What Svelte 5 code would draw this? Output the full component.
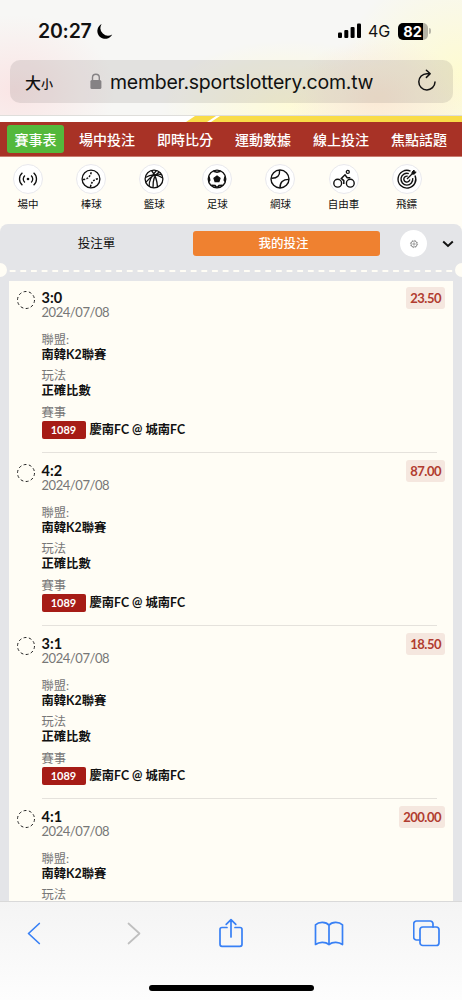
<script>
  const menu = ["賽事表", "場中投注", "即時比分", "運動數據", "線上投注", "焦點話題"];
  const sports = [
    { id: "live", name: "場中" },
    { id: "baseball", name: "棒球" },
    { id: "basketball", name: "籃球" },
    { id: "soccer", name: "足球" },
    { id: "tennis", name: "網球" },
    { id: "cycling", name: "自由車" },
    { id: "darts", name: "飛鏢" },
  ];

  const game = { date: "2024/07/08", league: "南韓K2聯賽" };
  const detail = { play: "正確比數", code: "1089", teams: "慶南FC @ 城南FC" };
  const bets = [
    { ...game, ...detail, score: "3:0", odds: "23.50" },
    { ...game, ...detail, score: "4:2", odds: "87.00" },
    { ...game, ...detail, score: "3:1", odds: "18.50" },
    { ...game, score: "4:1", odds: "200.00" },
  ];

  let active = 0;
</script>

<div class="phone">
  <header class="browser">
    <div class="status">
      <span class="time">20:27</span>
      <svg class="moon" width="17" height="17" viewBox="0 0 17 17">
        <path d="M5.6 1.1A7.8 7.8 0 1 0 16.2 11.4A7.6 7.6 0 0 1 5.6 1.1Z" />
      </svg>
      <svg class="signal" width="24" height="16" viewBox="0 0 24 16">
        <rect x="0" y="9.5" width="4" height="5.5" rx="1.1" />
        <rect x="6.3" y="7" width="4" height="8" rx="1.1" />
        <rect x="12.6" y="4" width="4" height="11" rx="1.1" />
        <rect x="19" y="0.5" width="4" height="14.5" rx="1.1" />
      </svg>
      <span class="network">4G</span>
      <span class="battery">82</span>
      <span class="battery-tip"></span>
    </div>
    <div class="address">
      <span class="text-size">大<small>小</small></span>
      <svg class="lock" width="12" height="17" viewBox="0 0 12 17">
        <path d="M2.5 8V4.6a3.4 3.4 0 0 1 6.8 0V8" fill="none" stroke="#858284" stroke-width="1.4" />
        <rect x="0.4" y="7" width="11" height="9" rx="1.5" fill="#858284" />
      </svg>
      <span class="url">member.sportslottery.com.tw</span>
      <svg class="reload" width="20" height="24" viewBox="0 0 20 24" fill="none" stroke="#111" stroke-width="1.5" stroke-linecap="round" stroke-linejoin="round">
        <path d="M18 13a8.1 8.1 0 1 1-8.1-8.3h2.6M9.4 1.2l3.8 3.6-3.8 3.6" />
      </svg>
    </div>
  </header>

  <main>
    <svg class="stripe" width="462" height="6" viewBox="0 0 462 6">
      <rect width="462" height="6" fill="#fff" />
      <path d="M195 0H216L207 6H186ZM220 0H462V6H211Z" fill="#f9dc48" />
    </svg>

    <nav class="menu">
      {#each menu as item, i}
        <button class:active={i === active} on:click={() => (active = i)}>{item}</button>
      {/each}
    </nav>

    <div class="sports">
      {#each sports as sport}
        <div class="sport">
          <span class="sport-icon">
            <svg width="22" height="22" viewBox="0 0 22 22" fill="none" stroke="#111" stroke-width="1.3">
              {#if sport.id === "live"}
                <circle cx="11" cy="11" r="1.3" fill="#111" stroke="none" />
                <path d="M7.9 7.4a4.8 4.8 0 0 0 0 7.2M14.1 7.4a4.8 4.8 0 0 1 0 7.2M5.4 4.7a8.3 8.3 0 0 0 0 12.6M16.6 4.7a8.3 8.3 0 0 1 0 12.6" />
              {:else if sport.id === "baseball"}
                <circle cx="11" cy="11" r="8.9" />
                <path d="M3 11.5Q10.5 11 11.5 2.8M10.5 19Q11.5 11.5 19 10.5" stroke-dasharray="2 1.3" stroke-width="1.5" />
              {:else if sport.id === "basketball"}
                <circle cx="11" cy="11" r="8.9" />
                <path d="M8.5 2.5Q14 9 14.5 19M2.4 9.5Q11 4 19.8 10M3 14.2Q12 3.5 19 7M6.2 18.3Q5.5 11 13.5 2.5M10 19.8Q9.5 8 16 4" />
              {:else if sport.id === "soccer"}
                <circle cx="11" cy="11" r="8.8" stroke-width="1.3" />
                <path d="M11 8l3 2.2-1.1 3.5H9.1L8 10.2Z" fill="#111" />
                <path d="M7.3 3.2L11 4.2l3.7-1M2.9 8.3l.8 3.9-.9 1.4M19.1 8.3l-.8 3.9.9 1.4M5.2 17.2l3.8.4 1.6 1.8M16.8 17.2l-3.8.4-1.6 1.8" stroke-width="1.6" />
              {:else if sport.id === "tennis"}
                <circle cx="11" cy="11" r="9" stroke-width="1.4" />
                <path d="M2.4 10.2C8.5 10.4 11 7.5 10.6 2.1M11 19.9C10.8 14 14 11.3 19.9 11.4" stroke-width="1.4" />
              {:else if sport.id === "cycling"}
                <circle cx="4.7" cy="15.2" r="3.9" stroke-width="1.4" />
                <circle cx="17.3" cy="15.2" r="3.9" stroke-width="1.4" />
                <circle cx="14.8" cy="3.9" r="1.5" stroke-width="1.3" />
                <path d="M10.8 16v-3.3L8.3 10.4 12 6.8l2.2 3h3.1" stroke-width="1.5" />
              {:else}
                <path d="M14.5 3.1A8.9 8.9 0 1 0 19 7.5M12.8 5.6A5.9 5.9 0 1 0 16.7 10.2M11.6 8.2A3 3 0 1 0 13.8 11.5" stroke-width="1.4" />
                <path d="M11 11L18 4" />
                <path d="M16 6V4.1L18 2l.5 1.7 1.7.5L18.1 6.2Z" fill="#111" stroke-width="0.9" />
              {/if}
            </svg>
          </span>
          <span class="sport-name">{sport.name}</span>
        </div>
      {/each}
    </div>

    <section class="slip">
      <div class="tabs">
        <span class="tab">投注單</span>
        <span class="tab selected">我的投注</span>
        <span class="settings">
          <svg width="10" height="10" viewBox="0 0 10 10" fill="none" stroke="#777" stroke-width="0.7">
            <circle cx="5" cy="5" r="3" />
            <circle cx="5" cy="5" r="1.1" />
            <circle cx="5" cy="5" r="3.6" stroke-dasharray="1.4 1.43" />
          </svg>
        </span>
        <svg class="chevron" width="12" height="8" viewBox="0 0 12 8" fill="none" stroke="#111" stroke-width="2">
          <path d="M1.2 1.5L6 5.9l4.8-4.4" />
        </svg>
      </div>
      <div class="perforation">
        <svg width="462" height="14" viewBox="0 0 462 14">
          <circle cx="0" cy="7" r="7" fill="#fffdf5" />
          <circle cx="462" cy="7" r="7" fill="#fffdf5" />
          <path d="M9.7 7.9H453" stroke="#fffdf5" stroke-width="2" stroke-dasharray="5.8 4.85" />
        </svg>
      </div>

      <div class="bets">
        {#each bets as bet}
          <article class="bet">
            <svg class="ring" width="20" height="20" viewBox="0 0 20 20">
              <circle cx="10" cy="10" r="8.5" fill="none" stroke="#222" stroke-width="1" stroke-dasharray="2.9 2.44" />
            </svg>
            <div class="detail">
              <div class="score">{bet.score}</div>
              <div class="date">{bet.date}</div>
              <dl>
                <dt>聯盟:</dt>
                <dd>{bet.league}</dd>
                <dt>玩法</dt>
                {#if bet.play}
                  <dd>{bet.play}</dd>
                  <dt>賽事</dt>
                  <dd class="match"><span class="code">{bet.code}</span>{bet.teams}</dd>
                {/if}
              </dl>
            </div>
            <span class="odds">{bet.odds}</span>
          </article>
        {/each}
      </div>
    </section>
  </main>

  <footer class="toolbar">
    <div class="tools">
      <svg width="28" height="30" viewBox="0 0 28 30"><path d="M18.3 5.5L7.5 15.5 18.3 25.5" /></svg>
      <svg class="disabled" width="28" height="30" viewBox="0 0 28 30"><path d="M9.5 5.5L20.5 15.5 9.5 25.5" /></svg>
      <svg width="28" height="30" viewBox="0 0 28 30">
        <path d="M11 9.5H6a2 2 0 0 0-2 2V26.3a2 2 0 0 0 2 2H24a2 2 0 0 0 2-2V11.5a2 2 0 0 0-2-2H19M15 19V1.8M10.2 6.3l4.8-4.7 4.8 4.7" />
      </svg>
      <svg width="30" height="30" viewBox="0 0 30 30">
        <path d="M15 7.3C12 3.5 5 3.5 1.5 6.8V26.5C5 24 11 23.3 15 26.5C19 23.3 25 24 28.5 26.5V6.8C25 3.5 18 3.5 15 7.3ZM15 7.3V26" />
      </svg>
      <svg width="28" height="30" viewBox="0 0 28 30">
        <rect x="7" y="9" width="19" height="18.5" rx="2.8" />
        <path d="M7 22H3.5a2.8 2.8 0 0 1-2.8-2.8V5.8A2.8 2.8 0 0 1 3.5 3H17.2a2.8 2.8 0 0 1 2.8 2.8V9" />
      </svg>
    </div>
    <div class="home-bar"></div>
  </footer>
</div>

<style>
  :global(body) {
    margin: 0;
  }

  .phone {
    display: flex;
    flex-direction: column;
    width: 462px;
    height: 1000px;
    overflow: hidden;
    background: #fffdf5;
    font-family: Lato, "Noto Sans CJK TC", sans-serif;
    color: #111;
  }

  svg {
    display: block;
    flex: none;
  }

  /* Browser chrome */
  .browser {
    box-sizing: border-box;
    flex: none;
    height: 116px;
    border-bottom: 1px solid #dfdedb;
    font-family: Inter, "Noto Sans CJK TC", sans-serif;
    background:
      radial-gradient(ellipse 100px 75px at 15px 90px, #fae5e5, transparent),
      radial-gradient(ellipse 90px 60px at 378px 98px, #fbe9d5, transparent),
      radial-gradient(ellipse 130px 65px at 290px 105px, #fefbd8, transparent),
      radial-gradient(ellipse 120px 110px at 462px 75px, #fefbd0, transparent),
      #f7f7f5;
  }

  .status {
    display: flex;
    align-items: center;
    height: 60px;
    padding: 2px 34px 0 38px;
    box-sizing: border-box;
  }

  .time {
    width: 58px;
    font-size: 19.5px;
    font-weight: 600;
    letter-spacing: -0.2px;
  }

  .signal {
    margin-left: auto;
  }

  .network {
    width: 30px;
    margin-left: 6px;
    font-size: 16px;
    letter-spacing: -0.2px;
  }

  .battery {
    box-sizing: border-box;
    width: 30px;
    height: 17px;
    padding-right: 1px;
    border-radius: 5px;
    background: linear-gradient(90deg, #000 82%, #b5b3a5 82%);
    color: #fff;
    font-size: 14.5px;
    font-weight: 700;
    line-height: 17px;
    text-align: center;
  }

  .battery-tip {
    width: 2px;
    height: 6px;
    margin: 0 -3px 0 1px;
    border-radius: 0 2px 2px 0;
    background: #b9b7a8;
  }

  .address {
    display: flex;
    align-items: center;
    box-sizing: border-box;
    height: 43px;
    margin: 0 9px 0 10px;
    padding: 0 16px 0 15px;
    border-radius: 10px;
    background: rgba(100, 90, 95, 0.14);
  }

  .text-size {
    width: 65px;
    font-size: 16px;
    font-weight: 500;
  }

  .text-size small {
    font-size: 12px;
  }

  .url {
    margin-left: 8px;
    font-size: 19.5px;
    letter-spacing: -0.25px;
    white-space: nowrap;
  }

  .reload {
    margin: -2px 0 0 auto;
  }

  main {
    flex: 1;
    min-height: 0;
    overflow: hidden;
  }

  /* Main menu */
  .menu {
    display: flex;
    align-items: center;
    gap: 8px;
    height: 34px;
    padding-left: 7px;
    border-bottom: 1px solid #c87d70;
    background: #a83226;
  }

  .menu button {
    flex: none;
    width: 70px;
    height: 28px;
    padding: 0;
    border: 0;
    border-radius: 3px;
    background: none;
    color: #fff;
    font: 500 14px "Noto Sans CJK TC", sans-serif;
    white-space: nowrap;
  }

  .menu button.active {
    width: 57px;
    background: #54b83c;
  }

  .sports {
    display: flex;
    height: 67px;
    padding: 7px 0 0;
    margin-left: -3.5px;
    box-sizing: border-box;
  }

  .sport {
    display: flex;
    flex: none;
    flex-direction: column;
    align-items: center;
    width: 63.1px;
  }

  .sport-icon {
    display: grid;
    place-items: center;
    width: 28px;
    height: 28px;
    border: 1px solid #e9e9ed;
    border-radius: 50%;
    background: #fff;
  }

  .sport-name {
    margin-top: 2px;
    font-size: 10.5px;
    line-height: 16px;
  }

  /* Betting slip */
  .slip {
    background: #e4e5e8;
    border-radius: 8px 8px 0 0;
  }

  .tabs {
    display: flex;
    align-items: center;
    height: 39px;
    padding: 0 8px 0 3px;
  }

  .tab {
    width: 187px;
    margin-right: 3px;
    height: 25px;
    border-radius: 3px;
    font-size: 12.5px;
    line-height: 25px;
    text-align: center;
  }

  .selected {
    box-sizing: border-box;
    padding-right: 6px;
    background: #ef8130;
    color: #fff;
    font-weight: 500;
  }

  .settings {
    display: grid;
    place-items: center;
    width: 27px;
    height: 27px;
    margin-left: 17px;
    border-radius: 50%;
    background: #fff;
  }

  .chevron {
    margin-left: auto;
  }

  .perforation {
    height: 18px;
  }

  .bets {
    margin: 0 9px;
    background: #fffdf5;
  }

  .bet {
    display: flex;
    align-items: flex-start;
    box-sizing: border-box;
    height: 173px;
    padding: 5.5px 8px 0 6px;
  }

  .ring {
    margin: 3.5px 6px 0 0.5px;
  }

  .detail {
    box-sizing: border-box;
    flex: none;
    width: 395px;
    height: 166px;
    margin-right: -395px;
    padding-top: 3.5px;
    border-bottom: 1px solid #e5e2dc;
    line-height: 15px;
  }

  .score {
    font-size: 14.5px;
    font-weight: 700;
  }

  .date {
    color: #777;
    font-size: 13px;
    letter-spacing: -0.45px;
  }

  dl {
    margin: 12px 0 0;
    font-size: 12.3px;
  }

  dt {
    color: #777;
  }

  dd {
    margin: 0 0 6.3px;
    font-weight: 700;
  }

  .match {
    display: flex;
    align-items: center;
    gap: 4px;
    margin-top: 1px;
    line-height: 18px;
  }

  .code {
    width: 44px;
    border-radius: 2px;
    background: #a61c16;
    color: #fff;
    font-size: 11px;
    text-align: center;
  }

  .odds {
    margin-left: auto;
    padding: 0 4px;
    border-radius: 3px;
    background: #f5e7df;
    color: #b13c30;
    font-size: 13px;
    font-weight: 700;
    letter-spacing: -0.5px;
    line-height: 22px;
  }

  /* Bottom toolbar */
  .toolbar {
    box-sizing: border-box;
    flex: none;
    height: 99px;
    border-top: 1px solid #d9d9d9;
    background: linear-gradient(#f4f4f4, #fdfdfd);
  }

  .tools {
    display: flex;
    justify-content: space-between;
    padding: 16px 21px 0;
  }

  .tools svg {
    fill: none;
    stroke: #3880f5;
    stroke-width: 1.7;
    stroke-linecap: round;
    stroke-linejoin: round;
  }

  .tools .disabled {
    stroke: #bfbfbf;
  }

  .home-bar {
    width: 165px;
    height: 6px;
    margin: 37px auto 0;
    border-radius: 3px;
    background: #000;
  }
</style>
